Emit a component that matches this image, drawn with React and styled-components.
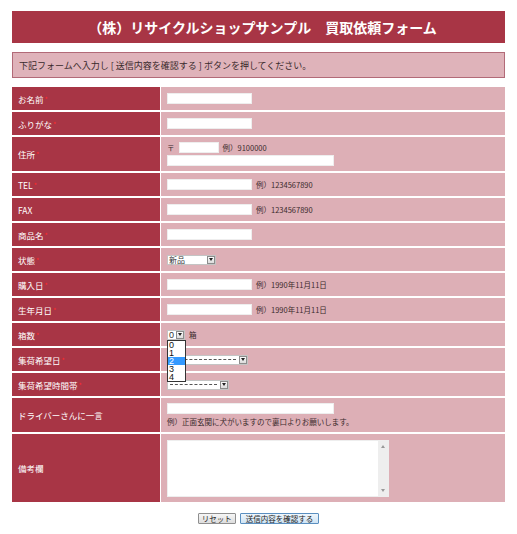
import React from "react";
import styled, { createGlobalStyle } from "styled-components";

const GlobalStyle = createGlobalStyle`
  html, body {
    margin: 0;
    padding: 0;
    background: #fff;
  }
  body {
    font-family: "Noto Sans CJK JP", "Noto Sans", sans-serif;
    color: #333;
  }
`;

const LABEL_BG = "#a83545";
const VALUE_BG = "#ddafb6";

const Page = styled.div`
  padding: 11px 12px 0;
  width: 493px;
`;

const TitleBar = styled.h1`
  margin: 0;
  height: 32px;
  display: flex;
  align-items: center;
  justify-content: center;
  background: ${LABEL_BG};
  color: #fff;
  font-size: 14px;
  font-weight: 700;
  padding-left: 8px;
`;

const Notice = styled.p`
  margin: 9px 0 9px;
  height: 26px;
  box-sizing: border-box;
  display: flex;
  align-items: center;
  padding-left: 6px;
  background: #dfb3ba;
  border: 1px solid #b26a78;
  font-size: 9px;
  color: #3a2a2c;
`;

const Table = styled.div`
  display: flex;
  flex-direction: column;
  gap: 2px;
`;

const Row = styled.div`
  display: grid;
  grid-template-columns: 148px 1fr;
  column-gap: 1px;
  min-height: ${p => p.$h || 23}px;
`;

const Label = styled.div`
  background: ${LABEL_BG};
  color: #fff;
  font-size: 8.5px;
  display: flex;
  align-items: center;
  padding-left: 6px;
`;

const Required = styled.span`
  color: #ff2a2a;
  font-size: 7px;
  margin-left: 1px;
`;

const Value = styled.div`
  background: ${VALUE_BG};
  padding: 0 6px;
  display: flex;
  flex-direction: ${p => (p.$stack ? "column" : "row")};
  align-items: ${p => (p.$stack ? "flex-start" : "center")};
  justify-content: ${p => (p.$stack ? "center" : "flex-start")};
  gap: ${p => (p.$stack ? 2 : 4)}px;
  font-size: 7.5px;
  color: #3a2a2c;
`;

const Line = styled.div`
  display: flex;
  align-items: center;
  gap: 4px;
`;

const TextInput = styled.input`
  width: ${p => p.$w}px;
  height: 11px;
  box-sizing: border-box;
  margin: 0;
  padding: 0 2px;
  border: 1px solid #eee;
  background: #fff;
  outline: none;
  font-size: 8px;
`;

const Hint = styled.span`
  white-space: nowrap;
`;

const SelectBox = styled.div`
  position: relative;
  width: ${p => p.$w}px;
  height: 10px;
  box-sizing: border-box;
  display: inline-flex;
  align-items: center;
  justify-content: space-between;
  background: #fff;
  border: 1px solid #c4c4c4;
  font-family: ${p => (p.$latin ? '"Liberation Sans", Arial, sans-serif' : "inherit")};
  font-size: ${p => (p.$latin ? 9 : 8)}px;
  line-height: 10px;
  color: #222;
  padding-left: 1px;
`;

const SelectText = styled.span`
  white-space: nowrap;
  color: #333;
`;

const Dashes = styled.span`
  flex: 1;
  height: 0;
  margin: 0 3px 0 1px;
  border-top: 1px dashed #555;
`;

const ArrowButton = styled.span`
  width: 8px;
  height: 8px;
  box-sizing: border-box;
  border: 1px solid #8c8c8c;
  background: linear-gradient(#fafafa, #dcdcdc);
  display: flex;
  align-items: center;
  justify-content: center;
  flex-shrink: 0;
`;

const OptionList = styled.ul`
  position: absolute;
  top: 9px;
  left: -1px;
  width: 17px;
  margin: 0;
  padding: 0;
  list-style: none;
  background: #fff;
  border: 1px solid #333;
  z-index: 2;
`;

const Option = styled.li`
  height: 8.2px;
  line-height: 8px;
  padding-left: 1px;
  font-family: "Liberation Sans", Arial, sans-serif;
  font-size: 9px;
  background: ${p => (p.$active ? "#3399ff" : "#fff")};
  color: ${p => (p.$active ? "#fff" : "#111")};
`;

const TextArea = styled.div`
  width: 222px;
  height: 57px;
  box-sizing: border-box;
  background: #fff;
  border: 1px solid #eee;
  display: flex;
  justify-content: flex-end;
`;

const ScrollBar = styled.div`
  width: 10px;
  background: #eeeeee;
  display: flex;
  flex-direction: column;
  justify-content: space-between;
  align-items: center;
  padding: 4px 0;
`;

const Buttons = styled.div`
  display: flex;
  justify-content: center;
  gap: 4px;
  margin-top: 11px;
`;

const Button = styled.button`
  height: 11px;
  margin: 0;
  padding: 0 ${p => (p.$primary ? 5 : 3)}px;
  box-sizing: border-box;
  font-family: inherit;
  font-size: 7.5px;
  line-height: 9px;
  color: #222;
  border: 1px solid ${p => (p.$primary ? "#5a8fc0" : "#8f8f8f")};
  border-radius: 1px;
  background: ${p =>
    p.$primary
      ? "linear-gradient(#eef6fc, #cfe4f5)"
      : "linear-gradient(#f6f6f6, #dddddd)"};
`;

const Arrow = () => (
  <ArrowButton>
    <svg width="4" height="3" viewBox="0 0 4 3">
      <path d="M0 0h4L2 3z" fill="#222" />
    </svg>
  </ArrowButton>
);

const Select = ({ w, text, latin, children }) => (
  <SelectBox $w={w} $latin={latin}>
    {text ? <SelectText>{text}</SelectText> : <Dashes />}
    <Arrow />
    {children}
  </SelectBox>
);

const Tri = ({ up }) => (
  <svg width="4" height="3" viewBox="0 0 4 3">
    <path d={up ? "M0 3h4L2 0z" : "M0 0h4L2 3z"} fill="#999" />
  </svg>
);

const Field = ({ label, required = true, h, stack, children }) => (
  <Row $h={h}>
    <Label>
      {label}
      {required && <Required>*</Required>}
    </Label>
    <Value $stack={stack}>{children}</Value>
  </Row>
);

export default function App() {
  return (
    <>
      <GlobalStyle />
      <Page>
        <TitleBar>（株）リサイクルショップサンプル　買取依頼フォーム</TitleBar>
        <Notice>下記フォームへ入力し [ 送信内容を確認する ] ボタンを押してください。</Notice>
        <Table>
          <Field label="お名前">
            <TextInput $w={85} />
          </Field>
          <Field label="ふりがな">
            <TextInput $w={85} />
          </Field>
          <Field label="住所" h={34} stack>
            <Line>
              <span>〒</span>
              <TextInput $w={40} />
              <Hint>例）9100000</Hint>
            </Line>
            <TextInput $w={167} />
          </Field>
          <Field label="TEL">
            <TextInput $w={85} />
            <Hint>例）1234567890</Hint>
          </Field>
          <Field label="FAX" required={false}>
            <TextInput $w={85} />
            <Hint>例）1234567890</Hint>
          </Field>
          <Field label="商品名">
            <TextInput $w={85} />
          </Field>
          <Field label="状態">
            <Select w={49} text="新品" />
          </Field>
          <Field label="購入日">
            <TextInput $w={85} />
            <Hint>例）1990年11月11日</Hint>
          </Field>
          <Field label="生年月日">
            <TextInput $w={85} />
            <Hint>例）1990年11月11日</Hint>
          </Field>
          <Field label="箱数">
            <Select w={18} text="0" latin>
              <OptionList>
                {[0, 1, 2, 3, 4].map(n => (
                  <Option key={n} $active={n === 2}>
                    {n}
                  </Option>
                ))}
              </OptionList>
            </Select>
            <Hint>箱</Hint>
          </Field>
          <Field label="集荷希望日">
            <Select w={81} />
          </Field>
          <Field label="集荷希望時間帯">
            <Select w={62} />
          </Field>
          <Field label="ドライバーさんに一言" required={false} h={34} stack>
            <TextInput $w={167} />
            <Hint>例）正面玄関に犬がいますので裏口よりお願いします。</Hint>
          </Field>
          <Field label="備考欄" required={false} h={68}>
            <TextArea>
              <ScrollBar>
                <Tri up />
                <Tri />
              </ScrollBar>
            </TextArea>
          </Field>
        </Table>
        <Buttons>
          <Button>リセット</Button>
          <Button $primary>送信内容を確認する</Button>
        </Buttons>
      </Page>
    </>
  );
}
